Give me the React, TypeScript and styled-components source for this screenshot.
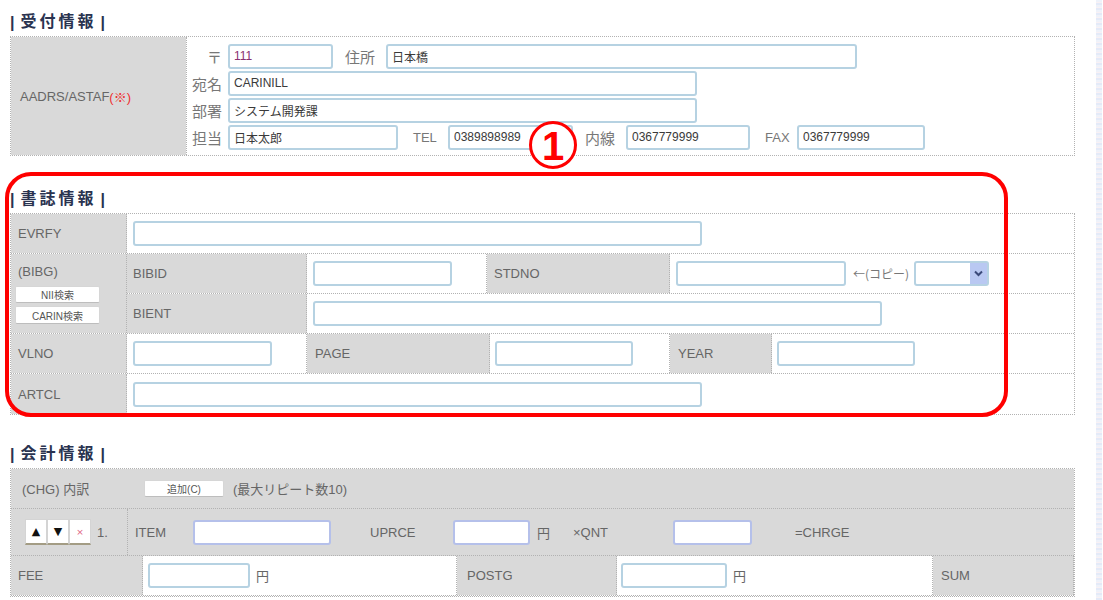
import React from "react";
import styled, { createGlobalStyle } from "styled-components";

const Global = createGlobalStyle`
  html, body { margin: 0; padding: 0; background: #fff; }
  body { font-family: "Liberation Sans", "Noto Sans CJK JP", sans-serif; color: #666; }
  * { box-sizing: border-box; }
`;

const gray = `#d9d9d9`;
const dot = `1px dotted #b2b2b2`;

const Page = styled.div`
  display: flex;
  width: 1103px;
  height: 600px;
  overflow: hidden;
`;

const Main = styled.div`
  position: relative;
  flex: 1;
  padding: 10px 0 0 10px;
`;

const ScrollStrip = styled.div`
  width: 6px;
  margin-right: 1px;
  background: repeating-linear-gradient(180deg, #eef2fa 0 2px, #f9f1f4 2px 3px, #e4eaf8 3px 5px);
`;

const Title = styled.div<{ $mt?: number }>`
  height: 26px;
  margin-top: ${(p) => p.$mt ?? 0}px;
  display: flex;
  align-items: flex-end;
  padding-bottom: 4px;
  font-size: 16px;
  font-weight: bold;
  color: #2a3350;
  white-space: pre;
`;

const TitleText = styled.span`
  letter-spacing: 3px;
  margin: 0 4px 0 6px;
`;

const Table = styled.div`
  width: 1065px;
  border: ${dot};
  display: flex;
  flex-direction: column;
`;

const Row = styled.div<{ $h?: number; $last?: boolean }>`
  display: flex;
  height: ${(p) => p.$h ?? 40}px;
  border-bottom: ${(p) => (p.$last ? "none" : dot)};
`;

const Col = styled.div`
  flex: 1;
  display: flex;
  flex-direction: column;
`;

const GrayCell = styled.div<{ $w?: number; $pl?: number }>`
  ${(p) => (p.$w ? `width: ${p.$w}px; flex: none;` : "flex: 1;")}
  background: ${gray};
  border-right: ${dot};
  display: flex;
  align-items: center;
  padding-left: ${(p) => p.$pl ?? 7}px;
  font-size: 13px;
  color: #666;
  white-space: nowrap;
`;

const WhiteCell = styled.div<{ $w?: number }>`
  ${(p) => (p.$w ? `width: ${p.$w}px; flex: none;` : "flex: 1;")}
  background: #fff;
  border-right: ${dot};
  display: flex;
  align-items: center;
  font-size: 13px;
  &:last-child { border-right: none; }
`;

const Field = styled.input<{ $w: number; $ml?: number; $tone?: "teal" | "blue" }>`
  width: ${(p) => p.$w}px;
  height: 25px;
  margin: 0 0 0 ${(p) => p.$ml ?? 0}px;
  padding: 0 4px;
  flex: none;
  border: 2px solid ${(p) => (p.$tone === "blue" ? "#b5c0ea" : "#b6d2e2")};
  border-radius: 3px;
  background: #fff;
  font-family: "Liberation Sans", "Noto Sans CJK JP", sans-serif;
  font-size: 12px;
  color: #3a3a3a;
  outline: none;
`;

/* ---------- section 1 ---------- */
const AddrTable = styled(Table)`
  flex-direction: row;
  height: 120px;
`;

const AddrLabelCell = styled.div`
  width: 175px;
  background: ${gray};
  display: flex;
  align-items: center;
  padding-left: 9px;
  font-size: 13px;
  color: #666;
`;

const Red = styled.span`
  color: #ee3030;
`;

const AddrBody = styled.div`
  flex: 1;
  border-left: ${dot};
  padding-top: 6px;
  display: flex;
  flex-direction: column;
  gap: 1px;
`;

const AddrRow = styled.div`
  display: flex;
  align-items: center;
  height: 26px;
`;

const KLabel = styled.span<{ $w: number; $ml?: number; $right?: boolean; $small?: boolean }>`
  width: ${(p) => p.$w}px;
  margin-left: ${(p) => p.$ml ?? 0}px;
  flex: none;
  text-align: ${(p) => (p.$right ? "right" : "left")};
  font-size: ${(p) => (p.$small ? 13 : 15)}px;
  color: #777;
  white-space: nowrap;
`;

/* ---------- section 2 ---------- */
const BibgCell = styled.div`
  width: 116px;
  flex: none;
  background: ${gray};
  border-right: ${dot};
  padding: 10px 0 0 4px;
  display: flex;
  flex-direction: column;
  font-size: 13px;
  color: #666;
`;

const BibgText = styled.span`
  padding-left: 3px;
  height: 22px;
`;

const SmallBtn = styled.button<{ $w: number; $h?: number; $mt?: number; $ml?: number }>`
  width: ${(p) => p.$w}px;
  height: ${(p) => p.$h ?? 17}px;
  margin: ${(p) => p.$mt ?? 0}px 0 0 ${(p) => p.$ml ?? 0}px;
  padding: 0;
  flex: none;
  background: #fff;
  border: 1px solid #d6d6d6;
  border-bottom-color: #bdbdbd;
  border-radius: 2px;
  font-family: "Liberation Sans", "Noto Sans CJK JP", sans-serif;
  font-size: 10px;
  color: #555;
`;

const Copy = styled.span`
  margin-left: 7px;
  font-family: "Noto Sans CJK JP", sans-serif;
  font-size: 12px;
  color: #777;
  white-space: nowrap;
`;

const Select = styled.div`
  width: 75px;
  height: 25px;
  margin-left: 5px;
  border: 2px solid #b6d2e2;
  border-radius: 3px;
  display: flex;
  justify-content: flex-end;
  align-items: stretch;
`;

const SelectArrow = styled.div`
  width: 17px;
  background: #b9c8f2;
  display: flex;
  align-items: center;
  justify-content: center;
`;

/* ---------- section 3 ---------- */
const GrayRow = styled.div<{ $h: number }>`
  display: flex;
  height: ${(p) => p.$h}px;
  background: ${gray};
  border-bottom: ${dot};
  align-items: center;
  font-size: 13px;
  color: #666;
  white-space: nowrap;
`;

const GraySub = styled.div<{ $w?: number; $pl?: number; $divider?: boolean }>`
  ${(p) => (p.$w ? `width: ${p.$w}px; flex: none;` : "flex: 1;")}
  height: 100%;
  display: flex;
  align-items: center;
  padding-left: ${(p) => p.$pl ?? 0}px;
  border-left: ${(p) => (p.$divider ? dot : "none")};
`;

const Txt = styled.span<{ $w?: number; $ml?: number }>`
  ${(p) => (p.$w ? `width: ${p.$w}px;` : "")}
  margin-left: ${(p) => p.$ml ?? 0}px;
  flex: none;
  font-size: 13px;
  color: #666;
  white-space: nowrap;
`;

const ArrowGroup = styled.div`
  display: flex;
  height: 26px;
`;

const ArrowBtn = styled.button<{ $x?: boolean }>`
  width: 22px;
  height: 26px;
  padding: 0;
  background: #fff;
  border: 1px solid #d4d4d4;
  border-bottom: 2px solid #a39c84;
  font-size: ${(p) => (p.$x ? 9 : 11)}px;
  color: ${(p) => (p.$x ? "#e06080" : "#111")};
  font-family: "DejaVu Sans", sans-serif;
`;

/* ---------- annotation overlay ---------- */
const Highlight = styled.div`
  position: absolute;
  left: 5px;
  top: 172px;
  width: 1003px;
  height: 245px;
  border: 4px solid #ff0000;
  border-radius: 26px;
  pointer-events: none;
`;

const Badge = styled.div`
  position: absolute;
  left: 529px;
  top: 121px;
  width: 48px;
  height: 48px;
  border: 3px solid #ff0000;
  border-radius: 50%;
  background: #fff;
  display: flex;
  align-items: center;
  justify-content: center;
  font-family: "Liberation Sans", sans-serif;
  font-weight: bold;
  font-size: 40px;
  color: #ff0000;
  line-height: 1;
  padding-top: 2px;
`;

export default function App() {
  return (
    <>
      <Global />
      <Page>
        <Main>
          <Title>|<TitleText>受付情報</TitleText>|</Title>
          <AddrTable>
            <AddrLabelCell>
              AADRS/ASTAF<Red>(※)</Red>
            </AddrLabelCell>
            <AddrBody>
              <AddrRow>
                <KLabel $w={35} $right>〒</KLabel>
                <Field $w={105} $ml={6} readOnly value="111" style={{ color: "#8a3070" }} />
                <KLabel $w={41} $ml={12}>住所</KLabel>
                <Field $w={471} readOnly value="日本橋" />
              </AddrRow>
              <AddrRow>
                <KLabel $w={35} $right>宛名</KLabel>
                <Field $w={469} $ml={6} readOnly value="CARINILL" />
              </AddrRow>
              <AddrRow>
                <KLabel $w={35} $right>部署</KLabel>
                <Field $w={469} $ml={6} readOnly value="システム開発課" />
              </AddrRow>
              <AddrRow>
                <KLabel $w={35} $right>担当</KLabel>
                <Field $w={170} $ml={6} readOnly value="日本太郎" />
                <KLabel $w={35} $ml={15} $small>TEL</KLabel>
                <Field $w={125} readOnly value="0389898989" />
                <KLabel $w={41} $ml={12}>内線</KLabel>
                <Field $w={124} readOnly value="0367779999" />
                <KLabel $w={32} $ml={15} $small>FAX</KLabel>
                <Field $w={128} readOnly value="0367779999" />
              </AddrRow>
            </AddrBody>
          </AddrTable>

          <Title $mt={31}>|<TitleText>書誌情報</TitleText>|</Title>
          <Table>
            <Row>
              <GrayCell $w={116}>EVRFY</GrayCell>
              <WhiteCell>
                <Field $w={569} $ml={6} readOnly value="" />
              </WhiteCell>
            </Row>
            <Row $h={80}>
              <BibgCell>
                <BibgText>(BIBG)</BibgText>
                <SmallBtn $w={85} $h={17}>NII検索</SmallBtn>
                <SmallBtn $w={85} $h={18} $mt={3}>CARIN検索</SmallBtn>
              </BibgCell>
              <Col>
                <Row>
                  <GrayCell $w={180} $pl={6}>BIBID</GrayCell>
                  <WhiteCell $w={180}>
                    <Field $w={139} $ml={6} readOnly value="" />
                  </WhiteCell>
                  <GrayCell $w={183}>STDNO</GrayCell>
                  <WhiteCell>
                    <Field $w={170} $ml={6} readOnly value="" />
                    <Copy>←(コピー)</Copy>
                    <Select>
                      <SelectArrow>
                        <svg width="9" height="7" viewBox="0 0 9 7">
                          <path d="M1 1.5 L4.5 5 L8 1.5" fill="none" stroke="#3b4a7a" strokeWidth="2" />
                        </svg>
                      </SelectArrow>
                    </Select>
                  </WhiteCell>
                </Row>
                <Row $last>
                  <GrayCell $w={180} $pl={6}>BIENT</GrayCell>
                  <WhiteCell>
                    <Field $w={569} $ml={6} readOnly value="" />
                  </WhiteCell>
                </Row>
              </Col>
            </Row>
            <Row>
              <GrayCell $w={116}>VLNO</GrayCell>
              <WhiteCell $w={180}>
                <Field $w={139} $ml={6} readOnly value="" />
              </WhiteCell>
              <GrayCell $w={183} $pl={8}>PAGE</GrayCell>
              <WhiteCell $w={180}>
                <Field $w={138} $ml={5} readOnly value="" />
              </WhiteCell>
              <GrayCell $w={102} $pl={8}>YEAR</GrayCell>
              <WhiteCell>
                <Field $w={138} $ml={5} readOnly value="" />
              </WhiteCell>
            </Row>
            <Row $last>
              <GrayCell $w={116}>ARTCL</GrayCell>
              <WhiteCell>
                <Field $w={569} $ml={6} readOnly value="" />
              </WhiteCell>
            </Row>
          </Table>

          <Title $mt={27}>|<TitleText>会計情報</TitleText>|</Title>
          <Table>
            <GrayRow $h={40}>
              <GraySub $pl={11}>
                <Txt $w={122}>(CHG) 内訳</Txt>
                <SmallBtn $w={80} $h={17}>追加(C)</SmallBtn>
                <Txt $ml={9}>(最大リピート数10)</Txt>
              </GraySub>
            </GrayRow>
            <GrayRow $h={47}>
              <GraySub $w={116} $pl={14}>
                <ArrowGroup>
                  <ArrowBtn>▲</ArrowBtn>
                  <ArrowBtn>▼</ArrowBtn>
                  <ArrowBtn $x>×</ArrowBtn>
                </ArrowGroup>
                <Txt $ml={6}>1.</Txt>
              </GraySub>
              <GraySub $pl={7} $divider>
                <Txt $w={58}>ITEM</Txt>
                <Field $w={138} $tone="blue" readOnly value="" />
                <Txt $w={83} $ml={39}>UPRCE</Txt>
                <Field $w={77} $tone="blue" readOnly value="" />
                <Txt $w={36} $ml={7}>円</Txt>
                <Txt $w={100}>×QNT</Txt>
                <Field $w={79} $tone="blue" readOnly value="" />
                <Txt $ml={43}>=CHRGE</Txt>
              </GraySub>
            </GrayRow>
            <Row>
              <GrayCell $w={132}>FEE</GrayCell>
              <WhiteCell $w={314}>
                <Field $w={102} $ml={5} readOnly value="" />
                <Txt $ml={6}>円</Txt>
              </WhiteCell>
              <GrayCell $w={160} $pl={10}>POSTG</GrayCell>
              <WhiteCell $w={316}>
                <Field $w={106} $ml={4} readOnly value="" />
                <Txt $ml={6}>円</Txt>
              </WhiteCell>
              <GrayCell $pl={8}>SUM</GrayCell>
            </Row>
          </Table>

          <Highlight />
          <Badge>1</Badge>
        </Main>
        <ScrollStrip />
      </Page>
    </>
  );
}
